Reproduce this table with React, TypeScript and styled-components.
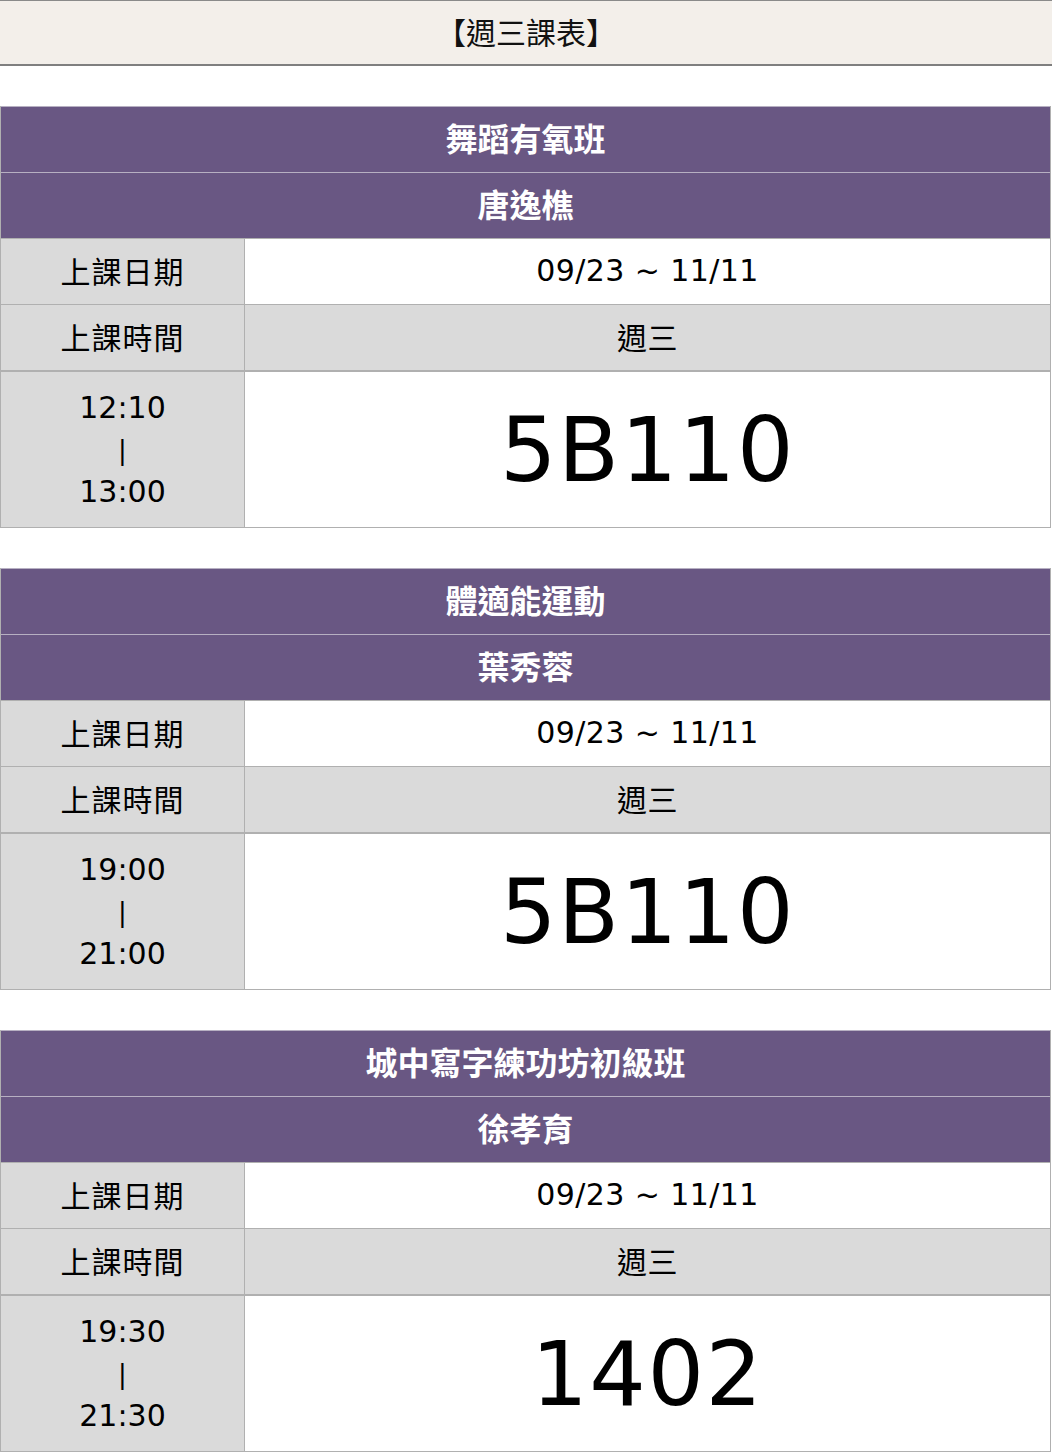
import React from "react";
import styled, { createGlobalStyle } from "styled-components";

const Global = createGlobalStyle`
  html, body { margin: 0; padding: 0; background: #ffffff; }
  body { font-family: "DejaVu Sans", "Noto Sans CJK TC", sans-serif; color: #000; }
`;

const Page = styled.div`
  width: 1052px;
  display: flex;
  flex-direction: column;
  gap: 40px;
`;

const TitleBar = styled.div`
  height: 66px;
  box-sizing: border-box;
  padding-bottom: 3px;
  background: #f3efea;
  border-top: 1px solid #8a8a8a;
  border-bottom: 2px solid #7f7f7f;
  display: flex;
  align-items: center;
  justify-content: center;
  font-family: "Noto Sans CJK TC", sans-serif;
  font-size: 30px;
  color: #111;
`;

const Table = styled.div`
  width: 1051px;
  box-sizing: border-box;
  display: grid;
  grid-template-columns: 244px 1fr;
  border: 1px solid #b0b0b0;
  border-top: none;
`;

const Head = styled.div`
  grid-column: 1 / span 2;
  height: 60px;
  padding-bottom: 5px;
  background: #695783;
  border-top: 1px solid #b7b0c2;
  color: #fff;
  font-family: "Noto Sans CJK TC", sans-serif;
  font-weight: 700;
  font-size: 32px;
  display: flex;
  align-items: center;
  justify-content: center;
`;

const Cell = styled.div<{ $shade?: boolean; $h?: number; $thick?: boolean }>`
  box-sizing: border-box;
  height: ${(p) => (p.$h ?? 65) + (p.$thick ? 2 : 1)}px;
  background: ${(p) => (p.$shade ? "#dadada" : "#ffffff")};
  border-top: ${(p) => (p.$thick ? 2 : 1)}px solid #b0b0b0;
  display: flex;
  align-items: center;
  justify-content: center;
  font-size: 30px;
  padding-bottom: 4px;
`;

const Label = styled(Cell)`
  border-right: 1px solid #b0b0b0;
  font-family: "Noto Sans CJK TC", sans-serif;
  letter-spacing: 1px;
`;

const Value = styled(Cell)`
  font-size: 30px;
  letter-spacing: 0.4px;
  padding-bottom: 3px;
`;

const Times = styled(Label)`
  flex-direction: column;
  line-height: 42px;
  font-family: "DejaVu Sans", sans-serif;
  font-size: 30px;
  letter-spacing: 0;
  padding-bottom: 0;
`;

const Bar = styled.span`
  font-size: 26px;
`;

const Room = styled(Cell)`
  font-size: 89px;
  letter-spacing: 1.5px;
  padding-bottom: 0;
`;

type Course = { name: string; teacher: string; start: string; end: string; room: string };

const courses: Course[] = [
  { name: "舞蹈有氧班", teacher: "唐逸樵", start: "12:10", end: "13:00", room: "5B110" },
  { name: "體適能運動", teacher: "葉秀蓉", start: "19:00", end: "21:00", room: "5B110" },
  { name: "城中寫字練功坊初級班", teacher: "徐孝育", start: "19:30", end: "21:30", room: "1402" },
];

export default function App() {
  return (
    <>
      <Global />
      <Page>
        <TitleBar>【週三課表】</TitleBar>
        {courses.map((c) => (
          <Table key={c.name}>
            <Head>{c.name}</Head>
            <Head>{c.teacher}</Head>
            <Label $shade>上課日期</Label>
            <Value>09/23 ~ 11/11</Value>
            <Label $shade>上課時間</Label>
            <Value $shade>週三</Value>
            <Times $shade $h={155} $thick>
              <span>{c.start}</span>
              <Bar>|</Bar>
              <span>{c.end}</span>
            </Times>
            <Room $h={155} $thick>{c.room}</Room>
          </Table>
        ))}
      </Page>
    </>
  );
}
